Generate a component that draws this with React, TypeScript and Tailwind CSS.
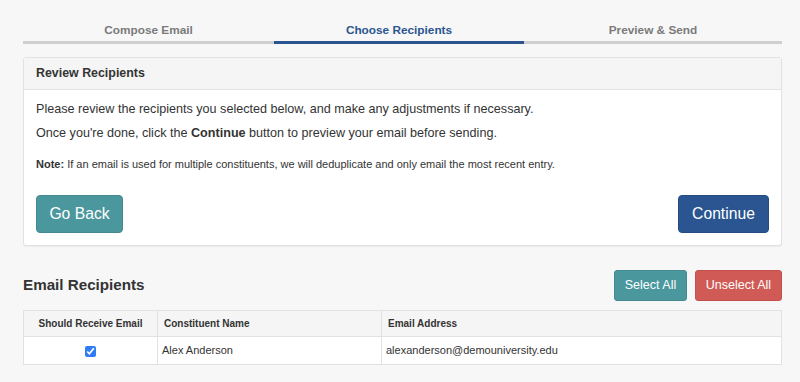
import React from 'react';

const tabs = [
  { label: 'Compose Email', active: false },
  { label: 'Choose Recipients', active: true },
  { label: 'Preview & Send', active: false },
];

export default function App() {
  return (
    <div className="min-h-[382px] bg-[#f7f7f7] pl-[23px] pr-[18px] pt-[21px] font-['Liberation_Sans',Arial,sans-serif] text-[#333]">
      <div className="grid grid-cols-[251px_250px_1fr]">
        {tabs.map((t) => (
          <div
            key={t.label}
            className={`h-[23px] border-b-[3px] pt-[1px] text-center text-[11.8px] font-bold ${
              t.active ? 'border-[#2a5590] text-[#2a5590]' : 'border-[#cfcfcf] text-[#7a7a7a]'
            }`}
          >
            {t.label}
          </div>
        ))}
      </div>

      <div className="mt-[13px] rounded-[3px] border border-[#e2e2e2] bg-white shadow-[0_1px_1px_rgba(0,0,0,0.05)]">
        <div className="flex h-[32px] items-center border-b border-[#e2e2e2] bg-[#f5f5f5] px-[12px] text-[12.4px] font-bold">
          Review Recipients
        </div>
        <div className="px-[12px] pb-[12px] pt-[10px]">
          <p className="text-[12.6px] leading-[18px]">
            Please review the recipients you selected below, and make any adjustments if necessary.
          </p>
          <p className="mt-[6px] text-[12.6px] leading-[18px]">
            Once you're done, click the <b>Continue</b> button to preview your email before sending.
          </p>
          <p className="mt-[15px] text-[11px] leading-[15px]">
            <b>Note:</b> If an email is used for multiple constituents, we will deduplicate and only email the most recent entry.
          </p>
          <div className="mt-[23px] flex justify-between">
            <button className="h-[38px] w-[87px] rounded-[4px] border border-[#438a90] bg-[#4b979e] text-[15.7px] text-white">
              Go Back
            </button>
            <button className="h-[38px] w-[91px] rounded-[4px] border border-[#244c82] bg-[#2a5590] text-[15.7px] text-white">
              Continue
            </button>
          </div>
        </div>
      </div>

      <div className="mt-[24px] flex items-center justify-between">
        <h2 className="text-[15.2px] font-bold">Email Recipients</h2>
        <div className="flex gap-[8px]">
          <button className="h-[31px] w-[73px] rounded-[3px] border border-[#438a90] bg-[#4b979e] text-[12.5px] text-white">
            Select All
          </button>
          <button className="h-[31px] w-[87px] rounded-[3px] border border-[#c4504b] bg-[#d05a55] text-[12.5px] text-white">
            Unselect All
          </button>
        </div>
      </div>

      <table className="mt-[9px] w-full border-collapse border border-[#e2e2e2] text-left">
        <thead>
          <tr className="h-[26px] bg-[#f5f5f5] text-[10px] font-bold">
            <th className="w-[134px] border border-[#e2e2e2] text-center">Should Receive Email</th>
            <th className="w-[224px] border border-[#e2e2e2] px-[6px]">Constituent Name</th>
            <th className="border border-[#e2e2e2] px-[6px]">Email Address</th>
          </tr>
        </thead>
        <tbody>
          <tr className="h-[28px] bg-white text-[11px]">
            <td className="border border-[#e2e2e2] text-center">
              <input type="checkbox" defaultChecked className="h-[11px] w-[11px] align-middle accent-[#2f7cf6]" />
            </td>
            <td className="border border-[#e2e2e2] px-[4px]">Alex Anderson</td>
            <td className="border border-[#e2e2e2] px-[4px]">alexanderson@demouniversity.edu</td>
          </tr>
        </tbody>
      </table>
    </div>
  );
}
